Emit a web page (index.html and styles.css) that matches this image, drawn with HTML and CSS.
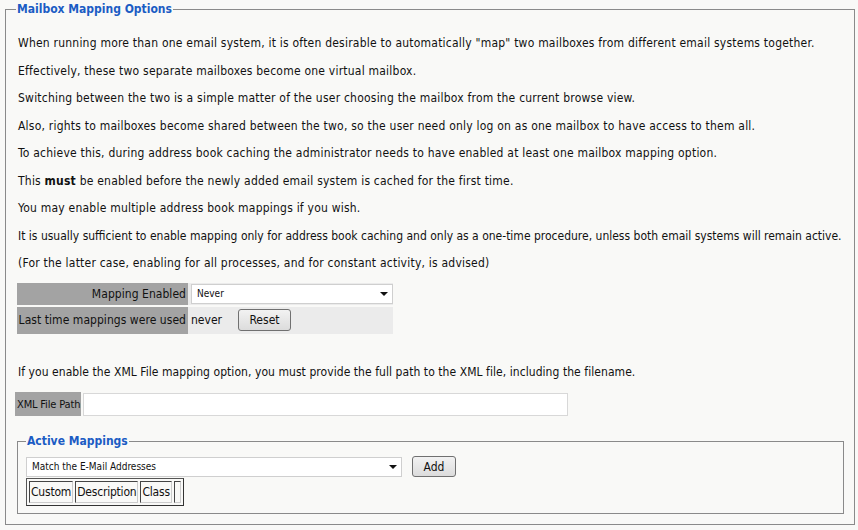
FILE: index.html
```html
<!DOCTYPE html>
<html>
<head>
<meta charset="utf-8">
<link rel="stylesheet" href="styles.css">
</head>
<body>
<fieldset class="group">
  <legend class="group-title">Mailbox Mapping Options</legend>
  <p>When running more than one email system, it is often desirable to automatically "map" two mailboxes from different email systems together.</p>
  <p>Effectively, these two separate mailboxes become one virtual mailbox.</p>
  <p>Switching between the two is a simple matter of the user choosing the mailbox from the current browse view.</p>
  <p>Also, rights to mailboxes become shared between the two, so the user need only log on as one mailbox to have access to them all.</p>
  <p>To achieve this, during address book caching the administrator needs to have enabled at least one mailbox mapping option.</p>
  <p>This <b>must</b> be enabled before the newly added email system is cached for the first time.</p>
  <p>You may enable multiple address book mappings if you wish.</p>
  <p class="tight">It is usually sufficient to enable mapping only for address book caching and only as a one-time procedure, unless both email systems will remain active.</p>
  <p>(For the latter case, enabling for all processes, and for constant activity, is advised)</p>

  <div class="form-table">
    <div class="label-cell r1">Mapping Enabled</div>
    <div class="value-cell r1">
      <div class="select wide"><span>Never</span><span class="arrow"></span></div>
    </div>
    <div class="label-cell r2">Last time mappings were used</div>
    <div class="value-cell r2">
      <span class="never">never</span>
      <span class="btn reset">Reset</span>
    </div>
  </div>

  <p class="xml-note">If you enable the XML File mapping option, you must provide the full path to the XML file, including the filename.</p>

  <div class="xml-row">
    <div class="label-cell xml-label">XML File Path</div>
    <div class="text-input"></div>
  </div>

  <fieldset class="group inner">
    <legend class="group-title">Active Mappings</legend>
    <div class="add-row">
      <div class="select map-select"><span>Match the E-Mail Addresses</span><span class="arrow"></span></div>
      <span class="btn add">Add</span>
    </div>
    <div class="grid-table">
      <span class="gcell">Custom</span><span class="gcell">Description</span><span class="gcell">Class</span><span class="gcell empty"></span>
    </div>
  </fieldset>
</fieldset>
</body>
</html>
```
FILE: styles.css
```css
html, body {
  margin: 0;
  padding: 0;
  background: #f9f9f7;
}
body {
  font-family: "DejaVu Sans Condensed", "DejaVu Sans", sans-serif;
  font-size: 12px;
  color: #111;
}
.group {
  margin: 0 3px 0 5px;
  padding: 0 12px 12px 12px;
  border: 1px solid #8a8a8a;
  box-sizing: border-box;
  height: 525px;
  min-width: 0;
}
.group-title {
  color: #1b5cc4;
  font-weight: bold;
  font-size: 12px;
  padding: 0 1px;
  margin-left: -2px;
  line-height: 18px;
}
p {
  margin: 0;
  padding: 6px 0;
  line-height: 15.5px;
  letter-spacing: 0.22px;
  white-space: nowrap;
}
p:first-of-type {
  margin-top: 12px;
}
p.tight {
  letter-spacing: 0;
}
.form-table {
  display: grid;
  grid-template-columns: 171px 205px;
  row-gap: 2px;
  margin-top: 5px;
  margin-left: -1px;
  width: 376px;
}
.label-cell {
  background: #a3a3a3;
  text-align: right;
  padding-right: 2px;
  display: flex;
  align-items: center;
  justify-content: flex-end;
  white-space: nowrap;
  letter-spacing: 0.05px;
}
.value-cell {
  background: #ebebeb;
  display: flex;
  align-items: center;
}
.r1 { height: 22px; }
.r2 { height: 27px; }
.select {
  background: #fff;
  border: 1px solid #cfcfcf;
  box-sizing: border-box;
  display: flex;
  align-items: center;
  justify-content: space-between;
  padding: 0 4px 0 5px;
  font-size: 10px;
  color: #111;
}
.select.wide {
  margin-left: 3px;
  width: 202px;
  height: 20px;
}
.arrow {
  width: 0;
  height: 0;
  border-left: 4px solid transparent;
  border-right: 4px solid transparent;
  border-top: 4px solid #111;
}
.never {
  margin-left: 3px;
}
.btn {
  display: inline-flex;
  align-items: center;
  justify-content: center;
  box-sizing: border-box;
  border: 1px solid #707070;
  border-radius: 3px;
  background: linear-gradient(#f2f2f2, #dcdcdc);
  color: #111;
}
.reset {
  margin-left: 16px;
  width: 53px;
  height: 22px;
}
p.xml-note {
  margin-top: 25px;
  letter-spacing: 0.06px;
}
.xml-row {
  display: flex;
  align-items: center;
  margin-top: 6px;
  margin-left: -3px;
}
.xml-label {
  height: 24px;
  width: 66px;
  box-sizing: border-box;
  justify-content: flex-start;
  padding: 0 0 0 2px;
  font-size: 11px;
  letter-spacing: -0.15px;
}
.text-input {
  margin-left: 2px;
  width: 485px;
  height: 23px;
  box-sizing: border-box;
  background: #fff;
  border: 1px solid #d8d8d8;
}
.group.inner {
  margin: 16px -2px 0 -1px;
  padding: 0 8px 8px 8px;
  height: 82px;
}
.inner .group-title {
  margin-left: 0;
}
.add-row {
  display: flex;
  align-items: center;
  margin-top: 6px;
}
.map-select {
  width: 376px;
  height: 20px;
}
.add {
  margin-left: 10px;
  width: 44px;
  height: 21px;
}
.grid-table {
  display: inline-flex;
  gap: 2px;
  margin-top: 1px;
  padding: 2px;
  border: 1px solid #333;
  border-top-color: #555;
  border-left-color: #555;
}
.gcell {
  display: inline-block;
  padding: 2px 1px;
  border: 1px solid;
  border-color: #444 #ccc #ccc #444;
  line-height: 16px;
  letter-spacing: -0.2px;
}
.gcell.empty {
  width: 5px;
  padding: 2px 0;
}
```
